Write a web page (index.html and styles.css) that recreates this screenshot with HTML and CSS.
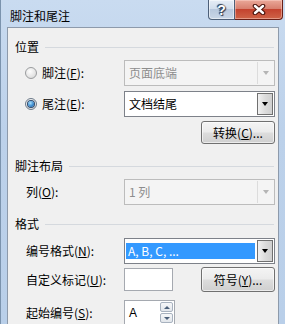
FILE: index.html
```html
<!DOCTYPE html>
<html lang="zh-CN">
<head>
    <meta charset="UTF-8">
    <title>脚注和尾注</title>
    <link rel="stylesheet" href="styles.css">
</head>
<body>

    <div class="window">
        <div class="titlebar">
            <span class="title">脚注和尾注</span>
            <div class="caption">
                <div class="cap-btn help">?</div>
                <div class="cap-btn close">
                    <svg width="14" height="11" viewBox="0 0 14 11">
                        <path d="M3 2 L11 9 M11 2 L3 9" stroke="#4a140d" stroke-width="4.6" stroke-linecap="round" fill="none"/>
                        <path d="M3 2 L11 9 M11 2 L3 9" stroke="#fff" stroke-width="2.4" stroke-linecap="round" fill="none"/>
                    </svg>
                </div>
            </div>
        </div>

        <div class="client">
            <!-- 位置 -->
            <div class="group-head"><span>位置</span><i class="rule"></i></div>

            <div class="row radio-row first">
                <label class="label"><span class="radio"></span>脚注(<u>F</u>):</label>
                <div class="combo disabled">
                    <span class="combo-text">页面底端</span>
                    <span class="combo-btn"><i class="arrow"></i></span>
                </div>
            </div>

            <div class="row radio-row">
                <label class="label"><span class="radio checked"></span>尾注(<u>E</u>):</label>
                <div class="combo">
                    <span class="combo-text">文档结尾</span>
                    <span class="combo-btn"><i class="arrow"></i></span>
                </div>
            </div>

            <div class="btn-row">
                <button class="btn">转换(<u>C</u>)...</button>
            </div>

            <!-- 脚注布局 -->
            <div class="group-head layout"><span>脚注布局</span><i class="rule"></i></div>

            <div class="row first">
                <label class="label">列(<u>O</u>):</label>
                <div class="combo disabled">
                    <span class="combo-text">1 列</span>
                    <span class="combo-btn"><i class="arrow"></i></span>
                </div>
            </div>

            <!-- 格式 -->
            <div class="group-head format"><span>格式</span><i class="rule"></i></div>

            <div class="row numfmt">
                <label class="label">编号格式(<u>N</u>):</label>
                <div class="combo focused">
                    <span class="combo-text"><span class="sel">A, B, C, ...</span></span>
                    <span class="combo-btn"><i class="arrow"></i></span>
                </div>
            </div>

            <div class="row custom">
                <label class="label">自定义标记(<u>U</u>):</label>
                <div class="ctrl-pair">
                    <span class="textbox"></span>
                    <button class="btn">符号(<u>Y</u>)...</button>
                </div>
            </div>

            <div class="row start">
                <label class="label">起始编号(<u>S</u>):</label>
                <div class="ctrl-pair">
                    <div class="spin">
                        <span class="spin-text">A</span>
                        <span class="spin-btns">
                            <span class="spin-btn"><i class="up"></i></span>
                            <span class="spin-btn"><i class="down"></i></span>
                        </span>
                    </div>
                </div>
            </div>
        </div>
    </div>

</body>
</html>
```

FILE: styles.css
```css
* {
    margin: 0;
    padding: 0;
    box-sizing: border-box;
}

body {
    width: 285px;
    height: 324px;
    overflow: hidden;
    font-family: "Noto Sans CJK SC", "Microsoft YaHei", sans-serif;
    font-size: 12px;
    color: #000;
    background: #bcd2ec;
}

u {
    text-decoration: underline;
    text-underline-offset: 1px;
}

/* Marco de la ventana */
.window {
    height: 324px;
    display: flex;
    flex-direction: column;
    background: linear-gradient(#c9dbf0, #bcd1ea 40%, #b9cfe9);
    border-left: 1px solid #7b93ad;
}

.titlebar {
    height: 27px;
    flex: none;
    display: flex;
    justify-content: space-between;
    align-items: flex-start;
    padding-left: 9px;
}

.title {
    margin-top: 8px;
    line-height: 16px;
    font-size: 12px;
}

.caption {
    display: flex;
    margin-right: 2px;
}

.cap-btn {
    height: 20px;
    display: flex;
    align-items: center;
    justify-content: center;
    border: 1px solid #4d5f78;
    border-top: none;
}

.help {
    width: 27px;
    border-radius: 0 0 0 4px;
    background: linear-gradient(#e6edf6, #d2deec 45%, #b8c8dd 50%, #c9d6e7);
    box-shadow: inset 0 0 0 1px rgba(255, 255, 255, 0.5);
    font-family: "Liberation Sans", sans-serif;
    font-weight: bold;
    font-size: 14px;
    color: #fff;
    text-shadow: 0 0 1px #2b3b52, 0 0 1px #2b3b52, 1px 1px 1px #2b3b52, -1px -1px 1px #2b3b52;
}

.close {
    width: 48px;
    border-left: none;
    border-color: #6a1f16;
    border-radius: 0 0 4px 0;
    background: linear-gradient(#eaa899, #d8806f 45%, #c4432f 50%, #cf6448);
    box-shadow: inset 0 0 0 1px rgba(255, 220, 210, 0.45);
}

/* Area de cliente */
.client {
    flex: 1;
    margin: 0 6px 0 6px;
    background: #f0f0f0;
    border: 1px solid #8d9aab;
    border-bottom: none;
    padding: 11px 3px 0 7px;
    display: flex;
    flex-direction: column;
}

.group-head {
    height: 16px;
    line-height: 16px;
    display: flex;
    align-items: center;
}

.group-head .rule {
    flex: 1;
    height: 1px;
    margin-left: 6px;
    margin-right: 1px;
    background: #d5d9de;
}

.group-head.layout {
    margin-top: 14px;
}

.group-head.format {
    margin-top: 11px;
}

.row {
    display: flex;
    align-items: center;
    padding-left: 11px;
    margin-top: 5px;
    line-height: 16px;
}

.row.numfmt {
    margin-top: 6px;
}

.row.custom {
    margin-top: 3px;
}

.row.start {
    margin-top: 8px;
}

.radio-row {
    padding-left: 10px;
}

.label {
    flex: 1;
    display: flex;
    align-items: center;
    white-space: nowrap;
}

.radio {
    width: 12px;
    height: 12px;
    margin-right: 5px;
    border-radius: 50%;
    border: 1px solid #9a9c9e;
    background: radial-gradient(circle at 40% 35%, #fdfdfd, #e4e4e4 60%, #d2d2d2);
    display: flex;
    align-items: center;
    justify-content: center;
}

.radio.checked {
    border-color: #6c7a8a;
}

.radio.checked::after {
    content: "";
    width: 6px;
    height: 6px;
    border-radius: 50%;
    background: radial-gradient(circle at 40% 35%, #a9e0fb, #3c8cd0 55%, #174f8f);
    box-shadow: 0 0 0 1px #2d4a6d;
}

/* Cuadro combinado */
.combo {
    width: 151px;
    height: 26px;
    flex: none;
    display: flex;
    border: 1px solid #7d8189;
    background: #fff;
    padding: 1px;
}

.combo-text {
    flex: 1;
    display: flex;
    align-items: center;
    padding-left: 3px;
}

.combo-btn {
    width: 16px;
    border: 1px solid #707070;
    background: linear-gradient(90deg, #f1f1f1, #dcdcdc 50%, #cfcfcf);
    display: flex;
    align-items: center;
    justify-content: center;
}

.arrow {
    width: 0;
    height: 0;
    border-top: 4px solid #000;
    border-left: 3.5px solid transparent;
    border-right: 3.5px solid transparent;
}

.combo.disabled {
    border-color: #bcbcbc;
    background: #f4f4f4;
    color: #8d8d8d;
}

.combo.disabled .combo-btn {
    border: none;
    border-left: 1px solid #dcdcdc;
    background: transparent;
    margin-left: 1px;
}

.combo.disabled .arrow {
    border-top-color: #b5b5b5;
}

.combo.focused .combo-text {
    padding: 2px 2px 2px 0;
}

.sel {
    flex: 1;
    height: 16px;
    line-height: 16px;
    padding-left: 2px;
    background: #3399ff;
    color: #fff;
}

/* Botones */
.btn-row {
    display: flex;
    justify-content: flex-end;
    margin-top: 4px;
}

.btn {
    width: 74px;
    height: 23px;
    border: 1px solid #707070;
    border-radius: 3px;
    background: linear-gradient(#f4f4f4, #ebebeb 48%, #dddddd 52%, #cfcfcf);
    box-shadow: inset 0 0 0 1px rgba(255, 255, 255, 0.6);
    font-family: inherit;
    font-size: 12px;
    line-height: 16px;
    color: #000;
}

.ctrl-pair {
    width: 151px;
    flex: none;
    display: flex;
    justify-content: space-between;
    align-items: center;
}

.row.custom .btn {
    height: 25px;
}

.textbox {
    width: 49px;
    height: 23px;
    border: 1px solid #a5a9b0;
    background: #fff;
}

/* Cuadro de numero */
.spin {
    width: 51px;
    height: 25px;
    display: flex;
    border: 1px solid #a5a9b0;
    background: #fff;
    padding: 1px;
}

.spin-text {
    flex: 1;
    padding-left: 3px;
    display: flex;
    align-items: center;
    font-family: "Liberation Sans", sans-serif;
}

.spin-btns {
    width: 13px;
    display: flex;
    flex-direction: column;
    gap: 1px;
}

.spin-btn {
    flex: 1;
    border: 1px solid #a8b2bf;
    border-radius: 2px;
    background: linear-gradient(#f6f7f9, #e2e6eb);
    display: flex;
    align-items: center;
    justify-content: center;
}

.up, .down {
    width: 0;
    height: 0;
    border-left: 3px solid transparent;
    border-right: 3px solid transparent;
}

.up {
    border-bottom: 3px solid #4c607a;
}

.down {
    border-top: 3px solid #4c607a;
}
```
